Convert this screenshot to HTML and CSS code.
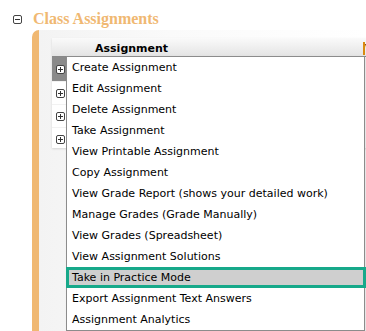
FILE: index.html
```html
<!doctype html>
<html lang="en">
	<head>
		<meta charset="UTF-8" />
		<title>Class Assignments</title>
		<link rel="stylesheet" href="styles.css">
	</head>
	<body>
		<div class="section-title">
			<span class="toggle minus"></span>
			<h2>Class Assignments</h2>
		</div>
		<div class="panel">
			<div class="grid">
				<div class="grid-header">
					<span class="col-name">Assignment</span>
					<span class="col-next">V</span>
				</div>
				<div class="grid-body">
					<div class="row active"><span class="toggle plus"></span></div>
					<div class="row"><span class="toggle plus"></span></div>
					<div class="row"><span class="toggle plus"></span></div>
					<div class="row"><span class="toggle plus"></span></div>
				</div>
			</div>
		</div>

		<!-- context menu for the selected assignment -->
		<ul class="menu">
			<li>Create Assignment</li>
			<li>Edit Assignment</li>
			<li>Delete Assignment</li>
			<li>Take Assignment</li>
			<li>View Printable Assignment</li>
			<li>Copy Assignment</li>
			<li>View Grade Report (shows your detailed work)</li>
			<li>Manage Grades (Grade Manually)</li>
			<li>View Grades (Spreadsheet)</li>
			<li>View Assignment Solutions</li>
			<li class="selected">Take in Practice Mode</li>
			<li>Export Assignment Text Answers</li>
			<li>Assignment Analytics</li>
		</ul>
	</body>
</html>
```

FILE: styles.css
```css
:root {
	--accent: #f0b872;
	--teal: #17a98a;
	--menu-border: #8c8c8c;
	--text-color: #000;
}

body {
	margin: 0;
	background: #fff;
	font-family: Tahoma, 'DejaVu Sans', Verdana, sans-serif;
	color: var(--text-color);
	overflow: hidden;
}

.section-title {
	display: flex;
	align-items: center;
	height: 22px;
	padding: 8px 0 0 13px;
}

.section-title h2 {
	margin: 0 0 0 11px;
	font-family: 'Liberation Serif', 'Times New Roman', serif;
	font-size: 16px;
	font-weight: bold;
	color: var(--accent);
}

.toggle {
	display: inline-block;
	position: relative;
	width: 7px;
	height: 7px;
	border: 1px solid #444;
	border-radius: 2px;
	background: #fff;
}

.toggle::before,
.toggle::after {
	content: '';
	position: absolute;
	background: #333;
}

.toggle::before {
	left: 1px;
	right: 1px;
	top: 3px;
	height: 1px;
}

.plus::after {
	top: 1px;
	bottom: 1px;
	left: 3px;
	width: 1px;
}

.panel {
	margin-left: 32px;
	height: 301px;
	border-left: 7px solid var(--accent);
	border-top-left-radius: 7px;
	background: linear-gradient(to right, #f3f3f3, #fafafa 40%, #fff);
	padding: 8px 0 0 13px;
}

.grid {
	background: #fff;
	box-shadow: 0 1px 2px rgba(0, 0, 0, 0.12);
	width: 320px;
	overflow: hidden;
}

.grid-header {
	display: flex;
	height: 17px;
	padding-left: 43px;
	align-items: flex-end;
	background: linear-gradient(#fafafa, #e4e4e4);
	border-bottom: 1px solid #888;
	font-size: 11px;
	font-weight: bold;
	padding-bottom: 1px;
}

.col-name {
	flex: 0 0 268px;
}

.col-next {
	color: #222;
	border-left: 2px solid #d98a10;
}

.grid-body {
	height: 91px;
	width: 14px;
	border-right: 1px solid #eee;
}

.row {
	height: 22px;
	display: flex;
	align-items: center;
	padding-left: 4px;
	border-bottom: 1px solid #f2f2f2;
}

.row:first-child {
	height: 24px;
}

.row.active {
	background: #8a8a8a;
}

.menu {
	position: absolute;
	left: 66px;
	top: 56px;
	width: 297px;
	margin: 0;
	padding: 0;
	list-style: none;
	background: #fff;
	border: 1px solid var(--menu-border);
	box-shadow: 1px 1px 2px rgba(0, 0, 0, 0.15);
	font-size: 11px;
}

.menu li {
	height: 21px;
	line-height: 21px;
	padding-left: 5px;
	white-space: nowrap;
}

.menu li.selected {
	margin: 0 -2px 0 -1px;
	padding-left: 3px;
	height: 15px;
	line-height: 15px;
	background: #cfcfcf;
	border: 3px solid var(--teal);
}
```
